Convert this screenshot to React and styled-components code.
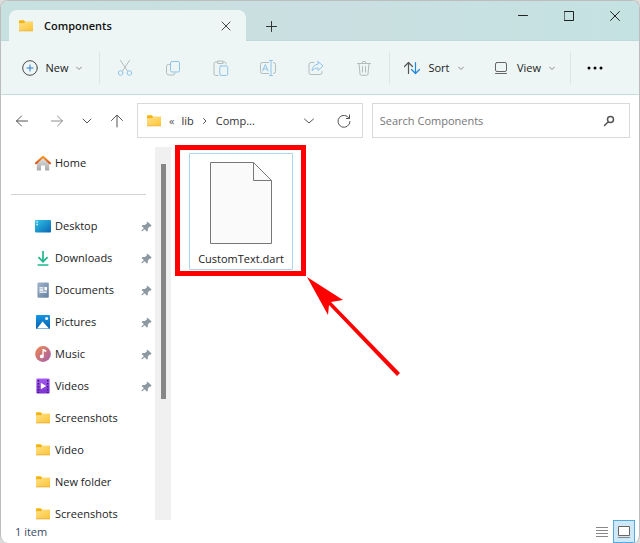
import React from 'react';
import styled, { createGlobalStyle } from 'styled-components';

const places = [
	{ name: 'Desktop', icon: 'desktop', pinned: true },
	{ name: 'Downloads', icon: 'downloads', pinned: true },
	{ name: 'Documents', icon: 'documents', pinned: true },
	{ name: 'Pictures', icon: 'pictures', pinned: true },
	{ name: 'Music', icon: 'music', pinned: true },
	{ name: 'Videos', icon: 'videos', pinned: true },
	{ name: 'Screenshots', icon: 'folder' },
	{ name: 'Video', icon: 'folder' },
	{ name: 'New folder', icon: 'folder' },
	{ name: 'Screenshots', icon: 'folder' },
];

const Gradients = () => (
	<HiddenSvg aria-hidden="true">
		<defs>
			<linearGradient id="folderFill" x1="0" y1="0" x2="1" y2="1">
				<stop offset="0" stopColor="#ffe08a" />
				<stop offset="1" stopColor="#fdc534" />
			</linearGradient>
			<linearGradient id="desktopFill" x1="0" y1="0" x2="1" y2="1">
				<stop offset="0" stopColor="#2fc6e6" />
				<stop offset="1" stopColor="#0a66b5" />
			</linearGradient>
			<linearGradient id="documentFill" x1="0" y1="0" x2="1" y2="1">
				<stop offset="0" stopColor="#a3b5cc" />
				<stop offset="1" stopColor="#64809f" />
			</linearGradient>
			<linearGradient id="pictureFill" x1="0" y1="0" x2="0" y2="1">
				<stop offset="0" stopColor="#1597e2" />
				<stop offset="1" stopColor="#0a5fae" />
			</linearGradient>
			<linearGradient id="musicFill" x1="0" y1="0" x2="1" y2="1">
				<stop offset="0" stopColor="#f08a4b" />
				<stop offset="1" stopColor="#a35bb0" />
			</linearGradient>
			<linearGradient id="videoFill" x1="0" y1="0" x2="0" y2="1">
				<stop offset="0" stopColor="#a45bf0" />
				<stop offset="1" stopColor="#7c31d0" />
			</linearGradient>
			<linearGradient id="houseFill" x1="0" y1="0" x2="0" y2="1">
				<stop offset="0" stopColor="#e3e3e3" />
				<stop offset="1" stopColor="#a9a9a9" />
			</linearGradient>
			<linearGradient id="roofFill" x1="0" y1="0" x2="0" y2="1">
				<stop offset="0" stopColor="#f79a1e" />
				<stop offset="1" stopColor="#d9501a" />
			</linearGradient>
		</defs>
	</HiddenSvg>
);

const drawings = {
	folder: (
		<>
			<path d="M1 3.2q0-.9.9-.9h4l1.2 1.5H15v2H1z" fill="#f5b30e" />
			<path d="M1 5.2h5l1.2-1.1H15v8.6H1z" fill="url(#folderFill)" />
			<path d="M1 12.4h14v.9H1z" fill="#eda61b" />
		</>
	),
	home: (
		<>
			<path d="M1.8 7.5 8 2.4l6.200 5.1V15.400h-4.200v-4.800H6v4.800H1.800z" fill="url(#houseFill)" />
			<path d="M1 8.2 8 1.7l7 6.500" fill="none" stroke="url(#roofFill)" strokeWidth="2" strokeLinecap="round" strokeLinejoin="round" />
		</>
	),
	desktop: (
		<>
			<rect x="0" y="2" width="16" height="12.4" rx="1" fill="url(#desktopFill)" />
			<path d="M1.4 3.2h1.4v1.4H1.4zM1.4 5.8h1.4v1.4H1.4z" fill="#fff" />
		</>
	),
	downloads: (
		<path d="M8 1v10.6M3.4 7.2 8 11.7l4.6-4.5M2.6 15h10.8" fill="none" stroke="#1fb88c" strokeWidth="1.7" />
	),
	documents: (
		<>
			<rect x="2.4" y="0.4" width="11.4" height="15.4" rx="1.2" fill="url(#documentFill)" />
			<path d="M4.4 5.8h4M4.4 8h4M4.4 10.2h7.4" stroke="#fff" strokeWidth="1.3" />
			<path d="M9.4 5h2.6v3.4H9.4z" fill="#fff" />
		</>
	),
	pictures: (
		<>
			<rect x="1" y="1" width="14" height="14" rx="1" fill="url(#pictureFill)" />
			<path d="M2 14.4 7.6 7.6l6.4 6.8z" fill="#fff" />
			<circle cx="11.6" cy="4.4" r="1.5" fill="#fff" />
		</>
	),
	music: (
		<>
			<circle cx="8" cy="8" r="7.9" fill="url(#musicFill)" />
			<circle cx="6.8" cy="10.4" r="1.9" fill="#fff" />
			<path d="M7.4 3h1.2l2.6 1.2v1.9L8.7 5.2v5.2H7.4z" fill="#fff" />
		</>
	),
	videos: (
		<>
			<rect x="1.4" y="0.6" width="13.2" height="15" rx="1" fill="url(#videoFill)" />
			<path d="M3.4 2v13M12.7 2v13" stroke="#3e1478" strokeWidth="1.5" strokeDasharray="1.5 1.5" />
			<path d="M5.8 4.8 11.2 8l-5.4 3.2z" fill="#fff" />
		</>
	),
	pin: (
		<path d="m9.4 2 4.900 4.800-1.500 1.400-1.200.100-2 2.200.100 2.600-1.200 1-2.700-2.700L2.400 14l-.800-.700 3.200-3.300-2.700-2.700 1.100-1.300 2.800.100L8.400 4.300l-.100-1.200z" fill="#8d98a2" />
	),
};

const Icon = ({ name, size = 16 }) => (
	<svg width={size} height={size} viewBox="0 0 16 16" aria-hidden="true">
		{drawings[name]}
	</svg>
);

// thin line icons, drawn in the colour of the control they stand in
const Line = ({ d, size = 16, color = 'currentColor', accent, accentColor = '#8fc4ea', width = 1 }) => (
	<svg
		width={size}
		height={size}
		viewBox={`0 0 ${size} ${size}`}
		fill="none"
		strokeWidth={width}
		strokeLinecap="round"
		strokeLinejoin="round"
		aria-hidden="true"
	>
		<path d={d} stroke={color} />
		{accent && <path d={accent} stroke={accentColor} />}
	</svg>
);

const Chevron = () => <Line size={6} d="M.5 2 3 4.5 5.500 2" color="#888" />;

const actions = [
	{
		label: 'Cut',
		d: 'M3.5.5 10.500 11M12.5.500 5.500 11',
		accent: 'M5.9 13a2.3 2.3 0 1 1-4.6 0 2.3 2.3 0 0 1 4.6 0M14.7 13a2.3 2.3 0 1 1-4.6 0 2.3 2.3 0 0 1 4.6 0',
	},
	{
		label: 'Copy',
		d: 'M4.5 4.5h-1a2 2 0 0 0-2 2v6a2.5 2.5 0 0 0 2.5 2.5h4a2 2 0 0 0 2-2',
		accent: 'M7 1.5h6a1.5 1.5 0 0 1 1.5 1.5v7.5a1.5 1.5 0 0 1-1.5 1.5h-6a1.5 1.5 0 0 1-1.5-1.5v-7.5a1.5 1.5 0 0 1 1.5-1.5z',
	},
	{
		label: 'Paste',
		d: 'M5 2H2.5a1.5 1.5 0 0 0-1.5 1.5v10.5a1.5 1.5 0 0 0 1.5 1.5H5M10 2h1.5A1.5 1.5 0 0 1 13 3.5V4M5 1h5v2.5H5z',
		accent: 'M8 6h5.5a1.2 1.2 0 0 1 1.2 1.2v7a1.2 1.2 0 0 1-1.2 1.2H8a1.2 1.2 0 0 1-1.2-1.2v-7A1.2 1.2 0 0 1 8 6z',
	},
	{
		label: 'Rename',
		d: 'M8.5 2.5H2.5a2 2 0 0 0-2 2v7a2 2 0 0 0 2 2h6M13.5 2.5a2 2 0 0 1 2 2v7a2 2 0 0 1-2 2',
		accent: 'M11 .5v15M9.5.5h3M9.5 15.5h3M2.5 11 5.3 4.5 8 11M3.5 9h3.5',
	},
	{
		label: 'Share',
		d: 'M6 2.5H3a2 2 0 0 0-2 2V12.5a2 2 0 0 0 2 2h9a2 2 0 0 0 2-2V11.5',
		accent: 'M10 1.5 15 6l-5 4.5V8C7 8 5.5 9 4 11c.3-4 2.5-6.5 6-7z',
	},
	{
		label: 'Delete',
		d: 'M1.5 3.5h13M3 3.5l1 10.5a1.5 1.5 0 0 0 1.5 1.3h5a1.5 1.5 0 0 0 1.5-1.3l1-10.5M6 3.3a2 2 0 0 1 4 0M6.5 6.5v5.5M9.5 6.5v5.5',
	},
];

const App = () => (
	<>
		<GlobalStyle />
		<Gradients />
		<Window>
			<TitleBar>
				<Tab>
					<Icon name="folder" />
					<TabTitle>Components</TabTitle>
					<TabClose type="button" aria-label="Close tab">
						<Line size={10} d="M1 1l8 8M9 1 1 9" />
					</TabClose>
				</Tab>
				<AddTab type="button" aria-label="New tab">
					<Line size={11} d="M5.5.5v10M.5 5.5h10" />
				</AddTab>
				<WindowButtons>
					<WindowButton type="button" aria-label="Minimize">
						<Line size={10} d="M.5 4.5h9" />
					</WindowButton>
					<WindowButton type="button" aria-label="Maximize">
						<Line size={10} d="M.5.5h9v9h-9z" />
					</WindowButton>
					<WindowButton type="button" aria-label="Close">
						<Line size={10} d="M.5.5l9 9M9.5.5l-9 9" />
					</WindowButton>
				</WindowButtons>
			</TitleBar>

			<Toolbar>
				<ToolButton type="button" $width="96px">
					<Line
						d="M15.300 8a7.300 7.300 0 1 1-14.600 0 7.300 7.300 0 0 1 14.600 0"
						color="#4a4a4a"
						accent="M8 5v6M5 8h6"
						accentColor="#2b7cc9"
					/>
					New
					<Chevron />
				</ToolButton>
				<Separator />
				<Actions>
					{actions.map(({ label, d, accent }) => (
						<ActionButton key={label} type="button" aria-label={label}>
							<Line d={d} accent={accent} />
						</ActionButton>
					))}
				</Actions>
				<Separator />
				<ToolButton type="button" $width="86px">
					<Line
						d="M4.500 13.500v-11M.500 6.500l4-4 4 4"
						color="#555"
						accent="M11.500 2.500v11M7.500 9.500l4 4 4-4"
						accentColor="#2486d8"
						width={1.2}
					/>
					Sort
					<Chevron />
				</ToolButton>
				<ToolButton type="button" $width="94px">
					<Line
						d="M4 2.5h8a1.5 1.5 0 0 1 1.5 1.5v6a1.5 1.5 0 0 1-1.5 1.5h-8a1.5 1.5 0 0 1-1.5-1.5v-6a1.5 1.5 0 0 1 1.5-1.5zM2.5 13.5h11"
						color="#666"
					/>
					View
					<Chevron />
				</ToolButton>
				<Separator />
				<MoreButton type="button" aria-label="See more">
					<svg width="16" height="4" viewBox="0 0 16 4" aria-hidden="true">
						<circle cx="2" cy="2" r="1.5" />
						<circle cx="8" cy="2" r="1.5" />
						<circle cx="14" cy="2" r="1.5" />
					</svg>
				</MoreButton>
			</Toolbar>

			<Navigation>
				<NavButtons>
					<NavButton type="button" aria-label="Back">
						<Line size={14} d="M1.500 7h11M6.500 2l-5 5 5 5" />
					</NavButton>
					<NavButton type="button" aria-label="Forward" $dim>
						<Line size={14} d="M1.500 7h11M7.500 2l5 5-5 5" />
					</NavButton>
					<NavButton type="button" aria-label="Recent locations" $narrow>
						<Line size={10} d="M1 3l4 4 4-4" />
					</NavButton>
					<NavButton type="button" aria-label="Up">
						<Line size={14} d="M7 13V1.500M1.500 6.500 7 1l5.500 5.500" />
					</NavButton>
				</NavButtons>
				<AddressBar>
					<Icon name="folder" />
					<Quote>«</Quote>
					<Crumb href="#lib">lib</Crumb>
					<Line size={8} d="M2.500 1.500 5 4 2.500 6.500" color="#555" />
					<Crumb href="#components">Comp...</Crumb>
					<AddressTools>
						<NavButton type="button" aria-label="Previous locations" $narrow>
							<Line size={10} d="M.500 3 5 7l4.500-4" />
						</NavButton>
						<NavButton type="button" aria-label="Refresh">
							<Line size={14} d="M12.300 4.500A6 6 0 1 0 13 7.500M12.500 1v3.500H9.500" />
						</NavButton>
					</AddressTools>
				</AddressBar>
				<SearchBar>
					<SearchInput type="text" aria-label="Search Components" placeholder="Search Components" />
					<SearchButton type="submit" aria-label="Search">
						<Line size={12} d="M10.500 4.500a3 3 0 1 1-6 0 3 3 0 0 1 6 0M5.300 6.700 1.500 10.500" width={1.5} />
					</SearchButton>
				</SearchBar>
			</Navigation>

			<Body>
				<Sidebar>
					<Place href="#home">
						<Icon name="home" />
						Home
					</Place>
					<Divider />
					{places.map(({ name, icon, pinned }, i) => (
						<Place key={i} href={`#place-${i}`}>
							<Icon name={icon} />
							{name}
							{pinned && (
								<Pin>
									<Icon name="pin" size={13} />
								</Pin>
							)}
						</Place>
					))}
				</Sidebar>
				<ScrollTrack>
					<ScrollThumb />
				</ScrollTrack>
				<Files>
					<File type="button">
						<svg width="62" height="83" viewBox="0 0 62 83" aria-hidden="true">
							<path d="M.5.5h43l18 18v63H.5z" fill="#fafafa" stroke="#777" />
							<path d="M43.5.5v18h18" fill="none" stroke="#777" />
						</svg>
						CustomText.dart
						<Highlight />
						<Arrow viewBox="0 0 94 100" aria-hidden="true">
							<path d="M0 0 36 23 24 25 93 96 90 99 22 28 21 38z" fill="#f00" />
						</Arrow>
					</File>
				</Files>
			</Body>

			<StatusBar>
				<StatusText>1 item</StatusText>
				<ViewButton type="button" aria-label="Details">
					<svg width="12" height="12" viewBox="0 0 12 12" aria-hidden="true">
						<path d="M0 1.5h12M0 4.5h12M0 7.5h12M0 10.5h12" stroke="#888" />
					</svg>
				</ViewButton>
				<ViewButton type="button" aria-label="Large icons" $active>
					<svg width="12" height="12" viewBox="0 0 12 12" aria-hidden="true">
						<path d="M.5.5h11v9H.5z" fill="#fff" stroke="#666" />
						<path d="M0 11.5h12" stroke="#888" />
					</svg>
				</ViewButton>
			</StatusBar>
		</Window>
	</>
);

export default App;

const GlobalStyle = createGlobalStyle`
	* {
		box-sizing: border-box;
	}
	body {
		margin: 0;
		background: #dcdcda;
		font-family: 'Open Sans', 'Noto Sans', sans-serif;
		font-size: 11px;
		line-height: 16px;
		color: #222;
	}
	button, input {
		margin: 0;
		padding: 0;
		border: 0;
		background: none;
		font: inherit;
		color: inherit;
	}
	a {
		color: inherit;
		text-decoration: none;
	}
	svg {
		display: block;
		flex: none;
	}
`;

const HiddenSvg = styled.svg`
	position: absolute;
	width: 0;
	height: 0;
`;

const Window = styled.div`
	display: flex;
	flex-direction: column;
	height: 100vh;
	border: 1px solid #bdbdbd;
	border-bottom: 0;
	border-radius: 8px;
	background: #fff;
	overflow: hidden;
`;

const TitleBar = styled.div`
	display: flex;
	align-items: flex-end;
	height: 40px;
	padding: 0 1px 0 8px;
	border-bottom: 1px solid #bfd9da;
	background: linear-gradient(90deg, #c7e0e0, #cadfe1 50%, #c5e2e2);
`;

const Tab = styled.div`
	display: flex;
	align-items: center;
	gap: 10px;
	width: 237px;
	height: 31px;
	margin-bottom: -1px;
	padding: 0 15px 0 9px;
	border-radius: 8px 8px 0 0;
	background: #edf6f5;
	color: #111;
`;

const TabTitle = styled.span`
	flex: 1;
	font-weight: 600;
`;

const TabClose = styled.button`
	display: flex;
	color: #444;
`;

const AddTab = styled.button`
	display: flex;
	align-items: center;
	justify-content: center;
	width: 30px;
	height: 27px;
	margin-left: 10px;
	color: #333;
`;

const WindowButtons = styled.div`
	display: flex;
	align-self: flex-start;
	margin-left: auto;
`;

const WindowButton = styled.button`
	display: flex;
	align-items: center;
	justify-content: center;
	width: 46px;
	height: 30px;
	color: #222;
`;

const Toolbar = styled.div`
	display: flex;
	align-items: center;
	height: 54px;
	padding-left: 2px;
	border-bottom: 1px solid #c4dcdd;
	background: #edf6f5;
`;

const ToolButton = styled.button`
	display: flex;
	align-items: center;
	justify-content: center;
	gap: 8px;
	width: ${(props) => props.$width};
	height: 32px;
	padding-left: 2px;
`;

const Separator = styled.div`
	width: 1px;
	height: 32px;
	background: #dce5e5;
`;

const Actions = styled.div`
	display: flex;
	flex: 1;
	justify-content: space-between;
	padding: 0 17px;
`;

const ActionButton = styled.button`
	color: #b3bbbc;
`;

const MoreButton = styled.button`
	display: flex;
	align-items: center;
	justify-content: center;
	width: 48px;
	height: 32px;
	margin-right: 20px;
`;

const Navigation = styled.div`
	display: flex;
	align-items: center;
	padding: 8px 9px 9px 7px;
`;

const NavButtons = styled.div`
	display: flex;
	align-items: center;
	gap: 15px;
	padding: 0 10px 0 4px;
`;

const NavButton = styled.button`
	display: flex;
	align-items: center;
	justify-content: center;
	width: ${(props) => (props.$narrow ? '10px' : '20px')};
	height: 24px;
	color: ${(props) => (props.$dim ? '#8e8e8e' : '#555')};
`;

const AddressBar = styled.div`
	display: flex;
	flex: 227;
	align-items: center;
	gap: 7px;
	height: 35px;
	padding: 0 8px;
	border: 1px solid #d9d9d9;
`;

const Quote = styled.span`
	color: #555;
`;

const Crumb = styled.a`
	color: #333;
`;

const AddressTools = styled.div`
	display: flex;
	gap: 20px;
	margin-left: auto;
`;

const SearchBar = styled.form`
	display: flex;
	flex: 257;
	align-items: center;
	height: 35px;
	margin-left: 9px;
	padding: 0 14px 0 7px;
	border: 1px solid #d9d9d9;
`;

const SearchInput = styled.input`
	flex: 1;
	min-width: 0;
	outline: none;

	&::placeholder {
		color: #767676;
		opacity: 1;
	}
`;

const SearchButton = styled.button`
	color: #555;
`;

const Body = styled.div`
	display: flex;
	flex: 1;
	min-height: 0;
`;

const Sidebar = styled.nav`
	width: 154px;
	overflow: hidden;
`;

const Place = styled.a`
	display: flex;
	align-items: center;
	gap: 4px;
	height: 32px;
	padding: 0 2px 0 34px;
`;

const Divider = styled.hr`
	height: 1px;
	margin: 15px 9px 15px 10px;
	border: 0;
	background: #d2d2d2;
`;

const Pin = styled.span`
	margin-left: auto;
`;

const ScrollTrack = styled.div`
	width: 16px;
	padding: 17px 5px 0 6px;
	background: #f0f0f0;
`;

const ScrollThumb = styled.div`
	height: 235px;
	background: #868686;
`;

const Files = styled.main`
	flex: 1;
	padding: 6px 18px;
`;

const File = styled.button`
	position: relative;
	display: flex;
	flex-direction: column;
	align-items: center;
	gap: 6px;
	width: 104px;
	padding: 8px 0 2px;
	border: 1px solid #a9d5f5;
	border-radius: 1px;
`;

const Highlight = styled.span`
	position: absolute;
	inset: -9px -14px -7px -15px;
	border: 5px solid #f00;
`;

const Arrow = styled.svg`
	position: absolute;
	top: 123px;
	left: 117px;
	width: 94px;
	height: 100px;
`;

const StatusBar = styled.div`
	display: flex;
	align-items: center;
	height: 23px;
	padding-right: 4px;
`;

const StatusText = styled.span`
	flex: 1;
	padding-left: 14px;
	color: #3a4a63;
`;

const ViewButton = styled.button`
	display: flex;
	align-items: center;
	justify-content: center;
	width: 22px;
	height: 23px;
	border: 1px solid ${(props) => (props.$active ? '#4fabe0' : 'transparent')};
	background: ${(props) => (props.$active ? '#cfe8f8' : 'none')};
`;
